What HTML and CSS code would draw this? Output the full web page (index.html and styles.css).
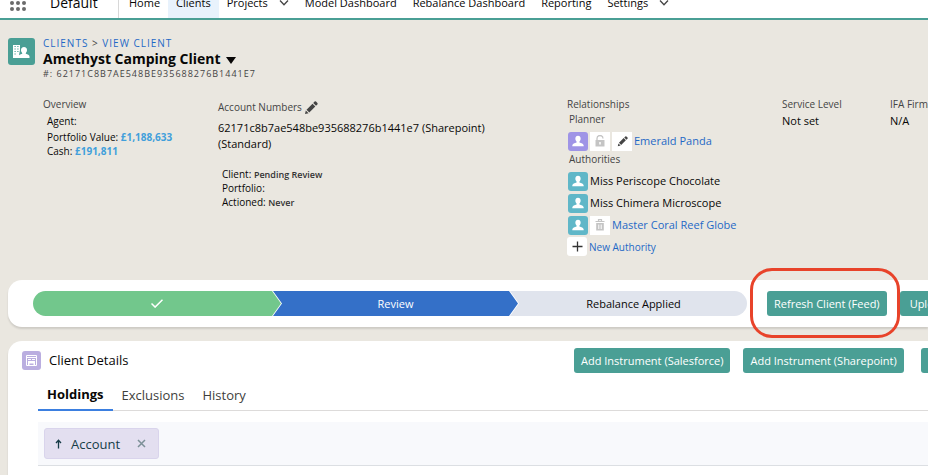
FILE: index.html
```html
<!DOCTYPE html>
<html lang="en">
<head>
  <meta charset="UTF-8">
  <title>View Client</title>
  <link rel="stylesheet" href="styles.css">
</head>
<body>
  <!-- icons shared by several rows -->
  <svg class="sprite" aria-hidden="true">
    <symbol id="user" viewBox="0 0 20 20">
      <path d="M10 4c1.800 0 2.800 1.400 2.800 3.100 0 1.200-.6 2.200-1.300 2.900v1c1.900.6 4.500 1.300 4.500 3.200v.8H4v-.8c0-1.900 2.600-2.600 4.500-3.200v-1C7.800 9.300 7.200 8.300 7.200 7.100 7.200 5.400 8.200 4 10 4z" fill="#fff"/>
    </symbol>
    <symbol id="pencil" viewBox="0 0 14 14">
      <path d="M1 13l.8-3.600 2.800 2.800zM2.500 8.700l6-6 2.800 2.800-6 6zM9.200 2L10.600.6q.7-.6 1.400 0l1.400 1.400q.6.700 0 1.400L12 4.800z" fill="#444"/>
    </symbol>
    <symbol id="chevron" viewBox="0 0 10 6">
      <path d="M1 0.500L5 4.800 9 0.500" fill="none" stroke="#444" stroke-width="1.300"/>
    </symbol>
  </svg>

  <header class="navbar">
    <button class="launcher" aria-label="App launcher">
      <svg width="16" height="16" viewBox="0 0 16 16" fill="#6b6b6b">
        <circle cx="2" cy="2" r="2"/><circle cx="8" cy="2" r="2"/><circle cx="14" cy="2" r="2"/>
        <circle cx="2" cy="8" r="2"/><circle cx="8" cy="8" r="2"/><circle cx="14" cy="8" r="2"/>
        <circle cx="2" cy="14" r="2"/><circle cx="8" cy="14" r="2"/><circle cx="14" cy="14" r="2"/>
      </svg>
    </button>
    <span class="app-name">Default</span>
    <nav class="nav">
      <a href="#">Home</a>
      <a href="#" class="active">Clients</a>
      <a href="#">Projects <svg width="10" height="6"><use href="#chevron"/></svg></a>
      <a href="#">Model Dashboard</a>
      <a href="#">Rebalance Dashboard</a>
      <a href="#">Reporting</a>
      <a href="#">Settings <svg width="10" height="6"><use href="#chevron"/></svg></a>
    </nav>
  </header>

  <main>
    <div class="page-header">
      <svg class="client-icon" width="27" height="27" viewBox="0 0 27 27">
        <path d="M5 7h7v5l-1 5v3H5z" fill="#fff"/>
        <path d="M6.500 8.500h1.200M9.300 8.500h1.200M6.500 11h1.200M9.300 11h1.200M6.500 13.500h1.200M9.300 13.500h1.200M6.500 16h1.200" stroke="#4a9f95" stroke-width="1.200"/>
        <path d="M16 9c2 0 3 1.400 3 3 0 1.300-.5 2.200-1.200 2.900v.8c1.800.6 3.700 1 3.700 2.900V20h-11v-1.400c0-1.900 1.900-2.300 3.700-2.900v-.8c-.7-.7-1.200-1.600-1.200-2.900 0-1.600 1-3 3-3z" fill="#fff"/>
      </svg>
      <div>
        <div class="crumbs"><a href="#">CLIENTS</a> <span>&gt;</span> <a href="#">VIEW CLIENT</a></div>
        <h1>Amethyst Camping Client <span class="caret"></span></h1>
        <div class="client-id">#: 62171C8B7AE548BE935688276B1441E7</div>
      </div>
    </div>

    <section class="details">
      <div>
        <h2>Overview</h2>
        <div class="overview">
          <p class="agent">Agent:</p>
          <p>Portfolio Value: <b>£1,188,633</b></p>
          <p>Cash: <b>£191,811</b></p>
        </div>
      </div>
      <div class="accounts">
        <h2>Account Numbers <button class="plain" aria-label="Edit account numbers"><svg width="14" height="14"><use href="#pencil"/></svg></button></h2>
        <p class="numbers">62171c8b7ae548be935688276b1441e7 (Sharepoint)<br>(Standard)</p>
        <div class="status">
          <p>Client: <b>Pending Review</b></p>
          <p>Portfolio:</p>
          <p>Actioned: <b>Never</b></p>
        </div>
      </div>
      <div>
        <h2>Relationships</h2>
        <h3>Planner</h3>
        <div class="person">
          <svg class="avatar planner"><use href="#user"/></svg>
          <button class="tile" aria-label="Unlock">
            <svg width="10" height="12" viewBox="0 0 10 12"><path d="M2 5V3.500a3 3 0 0 1 6 0" fill="none" stroke="#c4c4c4" stroke-width="1.300"/><path d="M.5 5h9v6.500h-9z" fill="#c4c4c4"/><path d="M5 7v2.500" stroke="#fff" stroke-width="1.500"/></svg>
          </button>
          <button class="tile" aria-label="Edit planner"><svg width="11" height="11" viewBox="0 0 14 14"><use href="#pencil"/></svg></button>
          <a href="#">Emerald Panda</a>
        </div>
        <h3>Authorities</h3>
        <div class="person"><svg class="avatar"><use href="#user"/></svg><span>Miss Periscope Chocolate</span></div>
        <div class="person"><svg class="avatar"><use href="#user"/></svg><span>Miss Chimera Microscope</span></div>
        <div class="person">
          <svg class="avatar"><use href="#user"/></svg>
          <button class="tile" aria-label="Remove authority">
            <svg width="10" height="12" viewBox="0 0 10 12"><path d="M.5 2.500h9M3.500 2V.7h3V2" fill="none" stroke="#c4c4c4" stroke-width="1.200"/><path d="M1.200 4h7.600v7.500H1.200z" fill="#c4c4c4"/><path d="M3.800 5.500v4.500M6.200 5.500v4.500" stroke="#fff"/></svg>
          </button>
          <a href="#">Master Coral Reef Globe</a>
        </div>
        <div class="new-authority">
          <button class="tile add" aria-label="Add authority"><svg width="11" height="11" viewBox="0 0 11 11"><path d="M5.500 0.500v10M0.500 5.500h10" stroke="#333" stroke-width="1.300"/></svg></button>
          <a href="#">New Authority</a>
        </div>
      </div>
      <div>
        <h2>Service Level</h2>
        <p class="value">Not set</p>
      </div>
      <div>
        <h2>IFA Firm</h2>
        <p class="value">N/A</p>
      </div>
    </section>

    <section class="card progress">
      <ol class="path">
        <li class="done"><svg width="12" height="9" viewBox="0 0 12 9"><path d="M0.500 4.500l3.600 3.600L11.500 0.700" fill="none" stroke="#fff" stroke-width="1.500"/></svg></li>
        <li class="current">Review</li>
        <li class="next">Rebalance Applied</li>
      </ol>
      <div class="progress-actions">
        <div class="highlight"><button class="btn">Refresh Client (Feed)</button></div>
        <button class="btn upload">Upload</button>
      </div>
    </section>

    <section class="card client-details">
      <div class="card-header">
        <svg class="details-icon" width="19" height="19" viewBox="0 0 19 19">
          <path d="M4.500 4.500h10v10h-10z" fill="none" stroke="#fff"/>
          <path d="M4.500 6.500h10" stroke="#fff"/>
          <path d="M6 8.500h3M10 8.500h3" stroke="#fff"/>
          <path d="M6 10h7v4.500h-1.500v-2h-4v2H6z" fill="#fff"/>
        </svg>
        <h2>Client Details</h2>
        <div class="card-actions">
          <button class="btn">Add Instrument (Salesforce)</button>
          <button class="btn">Add Instrument (Sharepoint)</button>
          <button class="btn more" aria-label="More actions"></button>
        </div>
      </div>
      <div class="tabs">
        <button class="selected">Holdings</button>
        <button>Exclusions</button>
        <button>History</button>
      </div>
      <div class="group-bar">
        <div class="chip">
          <svg width="7" height="10" viewBox="0 0 7 10"><path d="M3.500 9.500V1.500M1 4l2.500-2.700L6 4" fill="none" stroke="#163c47" stroke-width="1.300"/></svg>
          <span>Account</span>
          <button class="plain" aria-label="Remove Account"><svg width="9" height="9" viewBox="0 0 9 9"><path d="M1 1l7 7M8 1L1 8" stroke="#7c9097" stroke-width="1.500"/></svg></button>
        </div>
      </div>
    </section>
  </main>
</body>
</html>
```
FILE: styles.css
```css
* {
  box-sizing: border-box;
}
body {
  margin: 0;
  background-color: #eae7e0;
  font-family: "Open Sans", "Noto Sans", sans-serif;
  font-size: 11px;
  line-height: 16px;
  color: #080707;
  overflow: hidden;
}
h1, h2, h3, p, ol {
  margin: 0;
  padding: 0;
}
a {
  color: #1f69c6;
  text-decoration: none;
}
button {
  font-family: inherit;
  border: none;
  padding: 0;
  cursor: pointer;
}
.sprite {
  display: none;
}
.plain {
  background: none;
  line-height: 0;
}

/* top navigation, scrolled partly out of view */
.navbar {
  display: flex;
  align-items: center;
  height: 32px;
  margin-top: -12px;
  background-color: white;
  border-bottom: 2px solid #4a9f95;
}
.launcher {
  background: none;
  margin-left: 10px;
  line-height: 0;
}
.app-name {
  width: 92px;
  padding-left: 24px;
  font-size: 14px;
  white-space: nowrap;
}
.nav {
  display: flex;
  align-self: stretch;
  padding-left: 2px;
  border-left: 1px solid #d8d8d8;
}
.nav a {
  display: flex;
  align-items: center;
  gap: 11px;
  padding: 0 8px;
  color: #080707;
  white-space: nowrap;
}
.nav .active {
  background-color: #e8f2fc;
}

.page-header {
  display: flex;
  gap: 8px;
  padding: 16px 8px 0;
}
.client-icon {
  margin-top: 2px;
  background-color: #4a9f95;
  border-radius: 3px;
}
.crumbs {
  font-size: 10px;
  line-height: 15px;
  letter-spacing: 1px;
  color: #444;
}
h1 {
  font-size: 14px;
  line-height: 16px;
}
.caret {
  display: inline-block;
  margin-left: 2px;
  border: 5px solid transparent;
  border-top: 7px solid #080707;
  border-bottom: 0;
}
.client-id {
  font-size: 9px;
  line-height: 13px;
  letter-spacing: 1px;
  color: #444;
}

.details {
  display: grid;
  grid-template-columns: 175fr 349fr 215fr 108fr 38px;
  padding: 17px 0 0 43px;
  white-space: nowrap;
}
.details h2, .details h3 {
  font-size: 10px;
  font-weight: normal;
  line-height: 15px;
  color: #444;
}
.details h3 {
  padding: 0 0 3px 2px;
}
.overview {
  padding-left: 4px;
  font-size: 10px;
  line-height: 14px;
}
.overview .agent {
  line-height: 18px;
}
.overview b {
  color: #419fdb;
}
.accounts {
  padding-top: 3px;
}
.accounts h2 {
  display: flex;
  align-items: center;
  gap: 2px;
}
.numbers {
  padding-top: 5px;
}
.status {
  padding: 15px 0 0 4px;
  font-size: 10px;
  line-height: 14px;
}
.status b {
  font-size: 9px;
  font-weight: 600;
  line-height: 1;
  color: #333;
}
.value {
  padding-top: 1px;
}
.person {
  display: flex;
  align-items: center;
  gap: 2px;
  height: 22px;
  padding-left: 1px;
}
.avatar {
  width: 20px;
  height: 19px;
  background-color: #60b7c8;
  border-radius: 3px;
}
.planner {
  background-color: #9f94e6;
}
.tile {
  display: flex;
  align-items: center;
  justify-content: center;
  width: 20px;
  height: 19px;
  background-color: white;
}
.add {
  border-radius: 3px;
}
.new-authority {
  display: flex;
  align-items: center;
  gap: 2px;
  margin-top: 1px;
  font-size: 10px;
}

.card {
  margin-left: 8px;
  background-color: white;
  border-radius: 14px 0 0 14px;
  box-shadow: 0 2px 2px rgba(0,0,0,0.12);
}
.btn {
  flex: none;
  height: 25px;
  padding: 0 7px;
  background-color: #4a9f95;
  border-radius: 3px;
  color: white;
  font-size: 11px;
  white-space: nowrap;
}
.progress {
  display: flex;
  align-items: center;
  gap: 20px;
  height: 47px;
  margin-top: 24px;
  padding-left: 25px;
}
.path {
  display: flex;
  flex: 1;
  height: 25px;
  border-radius: 13px;
  overflow: hidden;
  list-style: none;
}
.path li {
  display: flex;
  align-items: center;
  justify-content: center;
}
.done {
  flex: 248;
  background-color: #72c78c;
  clip-path: polygon(0 0, calc(100% - 9px) 0, 100% 50%, calc(100% - 9px) 100%, 0 100%);
}
.current {
  flex: 245;
  margin-left: -8px;
  background-color: #3470c8;
  color: white;
  clip-path: polygon(0 0, calc(100% - 9px) 0, 100% 50%, calc(100% - 9px) 100%, 0 100%, 9px 50%);
}
.next {
  flex: 237;
  margin-left: -8px;
  text-indent: 10px;
  background-color: #e0e4ed;
  clip-path: polygon(0 0, 100% 0, 100% 100%, 0 100%, 9px 50%);
}
.progress-actions {
  display: flex;
  flex: 0 0 161px;
  gap: 13px;
  min-width: 0;
}
.upload {
  padding: 0 10px;
}
.highlight {
  position: relative;
  display: flex;
}
.highlight::after {
  content: "";
  position: absolute;
  inset: -23px -13px -22px -17px;
  border: 3px solid #e8432a;
  border-radius: 22px;
  pointer-events: none;
  z-index: 1;
}

.client-details {
  margin-top: 14px;
  padding-bottom: 20px;
  border-bottom-left-radius: 0;
}
.card-header {
  display: flex;
  align-items: center;
  height: 38px;
  padding-left: 14px;
}
.details-icon {
  background-color: #baaee0;
  border-radius: 3px;
}
.card-header h2 {
  flex: 1;
  padding-left: 8px;
  font-size: 13px;
  font-weight: normal;
}
.card-actions {
  display: flex;
  flex: 0 0 354px;
  gap: 13px;
  min-width: 0;
}
.more {
  width: 40px;
  margin-left: 4px;
}
.tabs {
  display: flex;
  height: 32px;
  margin-left: 30px;
  border-bottom: 1px solid #dddbda;
}
.tabs button {
  height: 32px;
  padding: 0 9px;
  background: none;
  font-size: 13px;
  color: #3e3e3c;
}
.tabs .selected {
  font-weight: bold;
  color: #080707;
  border-bottom: 2px solid #3b7fe0;
}
.group-bar {
  margin: 11px 0 0 30px;
  padding: 6px;
  background-color: #f8f9fc;
  border-bottom: 1px solid #dcdfe3;
}
.chip {
  display: inline-flex;
  align-items: center;
  height: 31px;
  padding: 0 12px 0 10px;
  background-color: #e3dff0;
  border: 1px solid #d9d4ec;
  border-radius: 3px;
  font-size: 13px;
  color: #163c47;
  vertical-align: top;
}
.chip span {
  padding: 0 17px 0 9px;
}
```
